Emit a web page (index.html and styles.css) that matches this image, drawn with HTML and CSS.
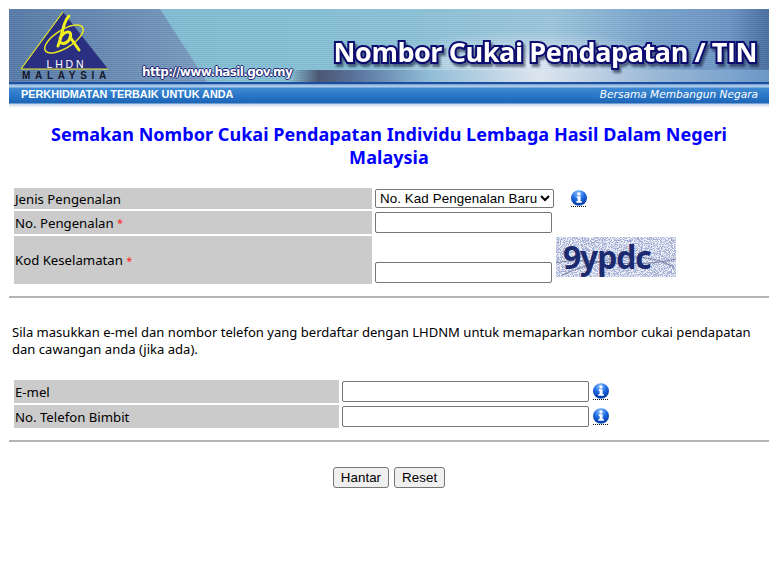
FILE: index.html
```html
<!DOCTYPE html>
<html lang="ms">
<head>
<meta charset="utf-8">
<title>Nombor Cukai Pendapatan / TIN</title>
<link rel="stylesheet" href="styles.css">
</head>
<body>
<header class="banner">
  <div class="banner-top">
    <div class="logo">
      <svg class="logo-mark" width="90" height="60" viewBox="0 0 90 60" aria-hidden="true">
        <path d="M43 1 L88 58 L1 58 Z" fill="#2b2f82"/>
        <path d="M1 58 L43 1 M1 58 H88" fill="none" stroke="#e8e820" stroke-width="1.2"/>
        <ellipse cx="44" cy="28" rx="22" ry="9" transform="rotate(-32 44 28)" fill="none" stroke="#e8e820" stroke-width="1.5"/>
        <path d="M49 5 C42 12 44 20 38 35 M40 27 C46 18 53 20 50 27 C48 32 43 34 40 31 M50 26 L59 39" fill="none" stroke="#f0f020" stroke-width="3" stroke-linecap="round"/>
      </svg>
      <span class="logo-lhdn">LHDN</span>
      <span class="logo-my">MALAYSIA</span>
    </div>
    <span class="banner-url">http://www.hasil.gov.my</span>
    <h2 class="banner-title">Nombor Cukai Pendapatan / TIN</h2>
  </div>
  <div class="banner-strip">
    <span class="strip-left">PERKHIDMATAN TERBAIK UNTUK ANDA</span>
    <span class="strip-right">Bersama Membangun Negara</span>
  </div>
</header>

<h1 class="page-title">Semakan Nombor Cukai Pendapatan Individu Lembaga Hasil Dalam Negeri<br>Malaysia</h1>

<form class="form">
  <div class="grid grid-a">
    <div class="label">Jenis Pengenalan</div>
    <div class="field field-select">
      <select class="select"><option>No. Kad Pengenalan Baru</option></select>
      <svg class="info" viewBox="0 0 16 17" width="16" height="17" aria-hidden="true"><use href="#info"/></svg>
    </div>
    <div class="label">No. Pengenalan <span class="req">*</span></div>
    <div class="field"><input class="input input-a" type="text"></div>
    <div class="label">Kod Keselamatan <span class="req">*</span></div>
    <div class="field field-captcha">
      <input class="input input-a input-low" type="text">
      <div class="captcha">
        <svg class="captcha-noise" width="120" height="40" aria-hidden="true">
          <filter id="grain" x="0" y="0" width="100%" height="100%">
            <feTurbulence type="fractalNoise" baseFrequency="1.1" numOctaves="1" seed="7"/>
            <feColorMatrix values="0 0 0 0 0.36  0 0 0 0 0.42  0 0 0 0 0.66  5 5 0 0 -4.5"/>
          </filter>
          <rect width="120" height="40" filter="url(#grain)"/>
          <path d="M0 26 C30 18 70 34 120 22 M6 38 C40 24 80 10 118 30" stroke="#7a82a6" fill="none" stroke-width="1"/>
        </svg>
        <span class="captcha-text">9ypdc</span>
      </div>
    </div>
  </div>

  <hr class="rule rule-a">

  <p class="note">Sila masukkan e-mel dan nombor telefon yang berdaftar dengan LHDNM untuk memaparkan nombor cukai pendapatan dan cawangan anda (jika ada).</p>

  <div class="grid grid-b">
    <div class="label">E-mel</div>
    <div class="field">
      <input class="input input-b" type="text">
      <svg class="info" viewBox="0 0 16 17" width="16" height="17" aria-hidden="true"><use href="#info"/></svg>
    </div>
    <div class="label">No. Telefon Bimbit</div>
    <div class="field">
      <input class="input input-b" type="text">
      <svg class="info" viewBox="0 0 16 17" width="16" height="17" aria-hidden="true"><use href="#info"/></svg>
    </div>
  </div>

  <hr class="rule rule-b">

  <div class="actions">
    <button class="btn" type="button">Hantar</button>
    <button class="btn" type="reset">Reset</button>
  </div>
</form>

<svg class="defs" width="0" height="0" aria-hidden="true">
  <defs>
    <radialGradient id="ball" cx="0.45" cy="0.2" r="0.85">
      <stop offset="0" stop-color="#8cc4ff"/>
      <stop offset="0.5" stop-color="#1a66e0"/>
      <stop offset="0.85" stop-color="#0a3fa8"/>
      <stop offset="1" stop-color="#2f86e8"/>
    </radialGradient>
    <symbol id="info" viewBox="0 0 16 17">
      <ellipse cx="8" cy="8" rx="8" ry="7.7" fill="url(#ball)"/>
      <path d="M5.8 6.2 H9.6 V11 H10.8 V12.8 H5.4 V11 H6.6 V8 H5.8 Z" fill="#fff"/>
      <circle cx="8" cy="3.9" r="1.6" fill="#fff"/>
      <path d="M0 16.5 H16" stroke="#111" stroke-dasharray="1 1"/>
    </symbol>
  </defs>
</svg>
</body>
</html>
```

FILE: styles.css
```css
* { box-sizing: border-box; }
html, body { margin: 0; padding: 0; background: #fff; }
body {
  padding: 9px 9px 0 9px;
  font-family: "Noto Sans", Tahoma, sans-serif;
  font-size: 13.2px;
  color: #000;
}
.banner { height: 98px; display: flex; flex-direction: column; overflow: hidden; }
.banner-top {
  height: 73px;
  position: relative;
  background:
    repeating-linear-gradient(180deg, rgba(255,255,255,.06) 0 1px, rgba(0,0,0,.04) 1px 2px),
    radial-gradient(ellipse 150px 34px at 520px 55px, rgba(232,238,248,.95), rgba(232,238,248,0) 100%),
    linear-gradient(90deg, #7fb9d2 0, #86c0d6 300px, #8dc2d8 420px, #9cc6dc 540px, #7aa4cd 640px, #6c94c4 720px, #4a70a0 759px);
}
.banner-top::before {
  content: "";
  position: absolute;
  inset: 0;
  clip-path: polygon(0 0, 151px 0, 198px 100%, 0 100%);
  background:
    repeating-linear-gradient(180deg, rgba(255,255,255,.08) 0 1px, rgba(0,0,0,.05) 1px 2px),
    linear-gradient(90deg, #557aa8 0, #7a9bc0 200px);
}
.banner-top::after {
  content: "";
  position: absolute;
  left: 0; right: 0; bottom: 0; height: 12px;
  background: linear-gradient(90deg, transparent 280px, #454b68 310px, #566f9c 350px, #8fbbd6 420px, #dfe6f0 530px, #a0bcd8 640px, #6f9ccb 759px);
  opacity: .9;
}
.logo { position: absolute; left: 11px; top: 2px; width: 90px; height: 70px; z-index: 1; }
.logo-mark { display: block; }
.logo-lhdn {
  position: absolute; left: 0; right: 0; top: 47px; text-align: center;
  font: 10.5px/12px "Liberation Sans", Arial, sans-serif; letter-spacing: 2.8px; color: #fff; padding-left: 3px;
}
.logo-my {
  position: absolute; left: 2px; top: 59px;
  font: bold 10px/12px "Liberation Sans", Arial, sans-serif; letter-spacing: 4.7px; color: #16162a; white-space: nowrap;
}
.banner-url {
  position: absolute; left: 133px; top: 56px; z-index: 1;
  font: bold 12px "DejaVu Sans", Verdana, sans-serif; letter-spacing: -.62px; color: #fff;
  text-shadow: 1px 0 #1c1c70, -1px 0 #1c1c70, 0 1px #1c1c70, 0 -1px #1c1c70;
}
.banner-title {
  position: absolute; right: 12px; top: 24px; margin: 0; z-index: 1;
  font: bold 27px "Open Sans", "DejaVu Sans", sans-serif; letter-spacing: -.45px; white-space: nowrap; color: #fff;
  -webkit-text-stroke: 4px #0b0b70; paint-order: stroke fill;
  filter: drop-shadow(2px 3px 1px rgba(20,30,60,.6));
}
.banner-strip {
  flex: 1;
  display: flex; justify-content: space-between; align-items: flex-start;
  padding: 5px 11px 0 12px;
  background: linear-gradient(180deg, #1c4ea0 0 2px, #6e9bd2 2px, #b0cce8 4px, #b0cce8 5px, #3f8ad2 6px, #2a76c6 14px, #1c64b6 21px, #c8d6e8 22px, #f0f3f8 100%);
  color: #fff;
}
.strip-left { font: bold 10.85px/14px "Liberation Sans", Arial, sans-serif; }
.strip-right { font: italic 10.6px/14px "DejaVu Sans", Verdana, sans-serif; }
.page-title {
  margin: 16px 0 0 0;
  text-align: center;
  font: bold 18px/23px "Noto Sans", Tahoma, sans-serif;
  letter-spacing: .05px;
  color: #0000ff;
}
.form { margin: 0; padding: 19px 0 0; }
.grid { display: grid; row-gap: 2px; column-gap: 3px; margin-left: 5px; }
.grid-a { grid-template-columns: 358px 1fr; grid-template-rows: 21px 23px 48px; }
.grid-b { grid-template-columns: 325px 1fr; grid-auto-rows: 23px; margin-top: 22px; }
.label { background: #cbcbcb; padding-left: 1px; display: flex; align-items: center; white-space: pre; }
.req { color: #ff2020; font-size: 11px; }
.field { display: flex; align-items: center; gap: 4px; }
.field-select { gap: 17px; }
.field-captcha { align-items: flex-end; }
.input {
  height: 21px; border: 1px solid #767676; border-radius: 2px; background: #fff; padding: 0 2px; margin: 0;
}
.input-a { width: 177px; }
.input-b { width: 247px; }
.input-low { margin-bottom: 1px; }
.select {
  width: 179px; height: 19px; border: 1px solid #767676; border-radius: 2px; background: #fff;
  font: 13.33px "Liberation Sans", Arial, sans-serif; letter-spacing: .1px; padding: 0; margin: 0;
}
.info { display: block; flex: none; }
.captcha {
  position: relative; width: 120px; height: 40px; margin-bottom: 7px;
  display: flex; align-items: center; padding-left: 7px;
  background: #f2f3f9;
}
.captcha-noise { position: absolute; left: 0; top: 0; }
.captcha-text {
  position: relative;
  font: bold 32px/40px "Open Sans", sans-serif; letter-spacing: -1.2px; color: #1c2a70;
}
.rule { border: 0; border-top: 2px solid #b4b4b4; margin: 0; }
.rule-a { margin-top: 12px; }
.rule-b { margin-top: 12px; }
.note { margin: 26px 0 0 3px; line-height: 17px; font-size: 13.05px; }
.actions { display: flex; justify-content: center; gap: 5px; margin-top: 25px; }
.btn {
  height: 21px; padding: 0 7px; border: 1px solid #767676; border-radius: 3px; background: #efefef;
  font: 13.33px "Liberation Sans", Arial, sans-serif; letter-spacing: .05px; color: #000;
}
.defs { position: absolute; }
```
